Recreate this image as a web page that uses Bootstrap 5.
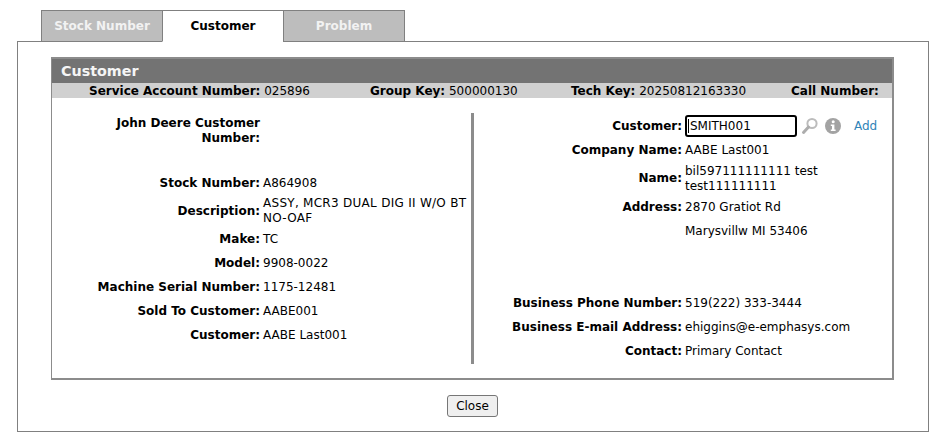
<!DOCTYPE html>
<html lang="en">
<head>
    <meta charset="UTF-8">
    <title>Customer</title>
    <link href="https://cdn.jsdelivr.net/npm/bootstrap@5.3.0/dist/css/bootstrap.min.css" rel="stylesheet">
    <style>
        body { font-family: "DejaVu Sans", Verdana, sans-serif; font-size: 12px; line-height: 15px; color: #000; background: #fff; }
        .page-wrap { padding: 10px 11px 0 17px; }
        .tab-row { padding-left: 24px; height: 32px; margin-bottom: -1px; position: relative; }
        .tab-item { width: 122px; height: 32px; margin-right: -1px; padding-top: 1px; background: #bdbdbd; border: 1px solid #808080; color: #f2f2f2; font-weight: 700; font-size: 12px; }
        .tab-item.current { background: #fff; color: #000; border-bottom-color: #fff; }
        .outer-panel { border: 1px solid #808080; height: 391px; padding: 15px 34px 0 33px; }
        .inner-box { border: 2px solid #8c8c8c; border-width: 2px 2px 2px 1px; height: 323px; }
        .box-title { background: #737373; color: #f5f5f5; font-weight: 700; font-size: 14.3px; height: 24px; padding-left: 9px; }
        .info-bar { background: #d0d0d0; height: 15px; line-height: 16px; padding-left: 37px; display: grid; grid-template-columns: 281px 201px 220px 1fr; }
        .col-left { width: 419px; padding-top: 1px; }
        .col-right { flex: 1; border-left: 3px solid #8c8c8c; padding-top: 1px; }
        .body-wrap { margin-top: 15px; height: 251px; }
        .field { display: flex; align-items: center; min-height: 24px; }
        .field.tall { min-height: 33px; }
        .col-left .field.tall { min-height: 32px; }
        .field.top { align-items: flex-start; min-height: 57px; padding-top: 2px; }
        .field.gap-after { margin-bottom: 48px; }
        .fld-label { font-weight: 700; text-align: right; flex: none; padding-right: 3px; width: 211px; }
        .fld-label.narrow { padding-left: 50px; }
        .desc-text { letter-spacing: .28px; }
        .input-wrap { position: relative; width: 112px; height: 22px; }
        .cust-input { width: 112px; height: 22px; border: 2px solid #000; border-radius: 3px; padding: 0 3px; font: inherit; outline: 0; display: block; }
        .fake-caret { position: absolute; left: 3px; top: 4px; width: 1px; height: 14px; background: #000; }
        .icon-search { margin-left: 4px; }
        .icon-info { margin-left: 5px; }
        .add-link { color: #2f84b8; text-decoration: none; margin-left: 12px; }
        .close-wrap { margin-top: 15px; }
        .close-btn { font-size: 12px; line-height: 15px; padding: 2px 0; height: 22px; width: 51px; background: #efefef; border: 1px solid #767676; border-radius: 3px; color: #000; }
    </style>
</head>
<body>
<div class="page-wrap">
    <div class="tab-row d-flex">
        <div class="tab-item d-flex align-items-center justify-content-center">Stock Number</div>
        <div class="tab-item current d-flex align-items-center justify-content-center">Customer</div>
        <div class="tab-item d-flex align-items-center justify-content-center">Problem</div>
    </div>
    <div class="outer-panel">
        <div class="inner-box">
            <div class="box-title d-flex align-items-center">Customer</div>
            <div class="info-bar">
                <span><b>Service Account Number:</b> 025896</span>
                <span><b>Group Key:</b> 500000130</span>
                <span><b>Tech Key:</b> 20250812163330</span>
                <span><b>Call Number:</b></span>
            </div>
            <div class="body-wrap d-flex">
                <div class="col-left">
                    <div class="field top"><div class="fld-label narrow">John Deere Customer Number:</div></div>
                    <div class="field"><div class="fld-label">Stock Number:</div><div>A864908</div></div>
                    <div class="field tall"><div class="fld-label">Description:</div><div class="desc-text">ASSY, MCR3 DUAL DIG II W/O BT NO-OAF</div></div>
                    <div class="field"><div class="fld-label">Make:</div><div>TC</div></div>
                    <div class="field"><div class="fld-label">Model:</div><div>9908-0022</div></div>
                    <div class="field"><div class="fld-label">Machine Serial Number:</div><div>1175-12481</div></div>
                    <div class="field"><div class="fld-label">Sold To Customer:</div><div>AABE001</div></div>
                    <div class="field"><div class="fld-label">Customer:</div><div>AABE Last001</div></div>
                </div>
                <div class="col-right">
                    <div class="field">
                        <div class="fld-label">Customer:</div>
                        <div class="input-wrap">
                            <input class="cust-input" type="text" value="SMITH001">
                            <span class="fake-caret"></span>
                        </div>
                        <svg class="icon-search" width="18" height="18" viewBox="0 0 18 18" fill="none">
                            <circle cx="11" cy="6.5" r="4.6" stroke="#bcbcbc" stroke-width="2"/>
                            <path d="M7.5 10 2.5 15.5" stroke="#adadad" stroke-width="3" stroke-linecap="round"/>
                        </svg>
                        <svg class="icon-info" width="18" height="18" viewBox="0 0 18 18">
                            <circle cx="9" cy="9" r="8" fill="#a3a3a3"/>
                            <circle cx="9.2" cy="4.8" r="1.5" fill="#fff"/>
                            <path d="M6.8 7.6h3.6v5h1.2v1.4H6.8v-1.4H8v-3.6H6.8z" fill="#fff"/>
                        </svg>
                        <a class="add-link" href="#">Add</a>
                    </div>
                    <div class="field"><div class="fld-label">Company Name:</div><div>AABE Last001</div></div>
                    <div class="field tall"><div class="fld-label">Name:</div><div>bil597111111111 test<br>test111111111</div></div>
                    <div class="field"><div class="fld-label">Address:</div><div>2870 Gratiot Rd</div></div>
                    <div class="field gap-after"><div class="fld-label"></div><div>Marysvillw MI 53406</div></div>
                    <div class="field"><div class="fld-label">Business Phone Number:</div><div>519(222) 333-3444</div></div>
                    <div class="field"><div class="fld-label">Business E-mail Address:</div><div>ehiggins@e-emphasys.com</div></div>
                    <div class="field"><div class="fld-label">Contact:</div><div>Primary Contact</div></div>
                </div>
            </div>
        </div>
        <div class="text-center close-wrap">
            <button class="close-btn" type="button">Close</button>
        </div>
    </div>
</div>
<script src="https://cdn.jsdelivr.net/npm/bootstrap@5.3.0/dist/js/bootstrap.bundle.min.js"></script>
</body>
</html>
